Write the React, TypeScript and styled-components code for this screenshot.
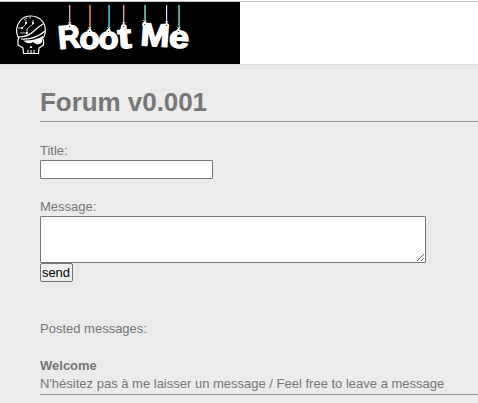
import React from "react";
import styled, { createGlobalStyle } from "styled-components";

const GlobalStyle = createGlobalStyle`
  * { box-sizing: border-box; }
  html, body { margin: 0; height: 100%; overflow: hidden; background: #ebebeb; }
  body { font-family: "Liberation Sans", Arial, sans-serif; font-size: 13px; color: #777; }
`;

const Header = styled.header`
  height: 65px;
  padding-top: 1px;
  background: #fff;
  border-bottom: 1px solid #dcdcdc;
`;

const Banner = styled.div`
  height: 63px;
  border-top: 1px solid #c8c8c8;
`;

const Logo = styled.svg`
  display: block;
  width: 240px;
  height: 62px;
  background: #000;
`;

const Letter = styled.text`
  font-family: "Liberation Sans", Arial, sans-serif;
  font-weight: bold;
  fill: #fff;
  stroke: #fff;
  stroke-width: 1.5px;
  stroke-linejoin: round;
`;

const Main = styled.main`
  padding: 22px 0 0 40px;
`;

const Title = styled.h1`
  margin: 0;
  height: 35px;
  line-height: 30px;
  font-size: 26px;
  letter-spacing: -0.05px;
  border-bottom: 1px solid #999;
`;

const Form = styled.form`
  display: flex;
  flex-direction: column;
  align-items: flex-start;
  padding-top: 20px;
`;

const Label = styled.label`
  height: 18px;
  line-height: 18px;
`;

const TextInput = styled.input`
  width: 173px;
  height: 19px;
  margin: 0 0 19px;
  padding: 1px 2px;
  border: 1px solid #767676;
  border-radius: 1px;
  background: #fff;
  font: inherit;
`;

const MessageArea = styled.textarea`
  display: block;
  width: 386px;
  height: 47px;
  margin: 0;
  padding: 2px;
  border: 1px solid #767676;
  border-radius: 1px;
  background: #fff;
  font: inherit;
`;

const SendButton = styled.button`
  width: 33px;
  height: 19px;
  padding: 0 1px 0 0;
  border: 1px solid #767676;
  border-radius: 2px;
  background: #efefef;
  color: #000;
  font: inherit;
  line-height: 17px;
`;

const Posts = styled.section`
  padding-top: 38px;
  line-height: 18px;
`;

const Post = styled.article`
  margin-top: 19px;
  padding-bottom: 1px;
  border-bottom: 1px solid #999;
`;

const strings = [
  { x: 69, end: 26, color: "#bbb", edge: "#8b2024" },
  { x: 89, end: 31, color: "#c66b17", edge: "#8c7b50" },
  { x: 108, end: 31, color: "#10a5c8", edge: "#5c96a8" },
  { x: 123, end: 26, color: "#bbb", edge: "#8b2024" },
  { x: 144, end: 24, color: "#00a9e8", edge: "#d09a38" },
  { x: 166, end: 25, color: "#ddd", edge: "#26206d" },
  { x: 178, end: 31, color: "#00a9e8", edge: "#b88c38" },
];

const letters = [
  { char: "R", x: 59, y: 49, size: 32.5, turn: -5, width: 22 },
  { char: "o", x: 79.5, y: 49.3, size: 32, turn: 0, width: 20 },
  { char: "o", x: 98.5, y: 49.3, size: 32, turn: 0, width: 20 },
  { char: "t", x: 118.5, y: 48.5, size: 34, turn: -4, width: 13.5 },
  { char: "M", x: 140, y: 45, size: 32, turn: 4, width: 29 },
  { char: "e", x: 168.5, y: 47, size: 31, turn: 4, width: 20 },
];

function RootMeLogo() {
  return (
    <Logo viewBox="0 2 240 62" role="img" aria-label="Root Me">
      <g fill="none" stroke="#fff" strokeWidth="1.2" strokeLinejoin="round">
        <path d="M18 37C15 30 17 25 20 21C23 17 27 16 31 16C36 16 40 18 43 22C46 27 46 32 44 37L42 38L43.5 40V45L39 48L38.5 53.5H23.5L23 48L18 45V40L19 38Z" />
        <path d="M18 37Q28 37 34 31Q38 27 43 24M21 39Q35 40 45 31" />
        <path d="M18 28H22L26 24V20M20 33H27V29L33 24V20M24 20L27 18M30 19V17" strokeWidth="0.8" />
        <path d="M28 53V50M31 53V50M34 53V50" strokeWidth="1.1" />
      </g>
      <g fill="#fff">
        <circle cx="26" cy="23" r="1.1" />
        <circle cx="22" cy="28" r="1.1" />
        <circle cx="33" cy="23" r="1.1" />
        <circle cx="27" cy="33" r="1.1" />
        <path d="M23 40.5Q34 41 43 36L42 42Q40 45 36 44L33 42Q30 44 27 43ZM29.5 48L31 45.5L32.5 48Z" />
      </g>
      {strings.map(({ x, end, color, edge }) => (
        <g key={x}>
          <rect x={x} y="5" width="1" height={end - 5} fill={color} />
          <rect x={x + 1} y="5" width="1" height={end - 5} fill={edge} />
        </g>
      ))}
      {letters.map(({ char, x, y, size, turn, width }) => (
        <Letter
          key={x}
          x={x}
          y={y}
          fontSize={size}
          textLength={width}
          lengthAdjust="spacingAndGlyphs"
          transform={`rotate(${turn} ${x} ${y})`}
        >
          {char}
        </Letter>
      ))}
      {strings.map(({ x, end }) => (
        <g key={x}>
          <circle cx={x + 0.5} cy={end + 0.5} r="2.4" fill="#fff" />
          <path d={`M${x - 1} ${end - 4}L${x + 1} ${end - 2}L${x + 2} ${end - 4}`} fill="none" stroke="#fff" strokeWidth="0.7" />
          <rect x={x} y={end} width="1" height="1" fill="#333" />
        </g>
      ))}
    </Logo>
  );
}

export default function App() {
  return (
    <>
      <GlobalStyle />
      <Header>
        <Banner>
          <RootMeLogo />
        </Banner>
      </Header>
      <Main>
        <Title>Forum v0.001</Title>
        <Form onSubmit={(event) => event.preventDefault()}>
          <Label htmlFor="title">Title:</Label>
          <TextInput id="title" name="title" />
          <Label htmlFor="message">Message:</Label>
          <MessageArea id="message" name="message" />
          <SendButton type="submit">send</SendButton>
        </Form>
        <Posts>
          <div>Posted messages:</div>
          <Post>
            <strong>Welcome</strong>
            <div>N'hésitez pas à me laisser un message / Feel free to leave a message</div>
          </Post>
        </Posts>
      </Main>
    </>
  );
}
